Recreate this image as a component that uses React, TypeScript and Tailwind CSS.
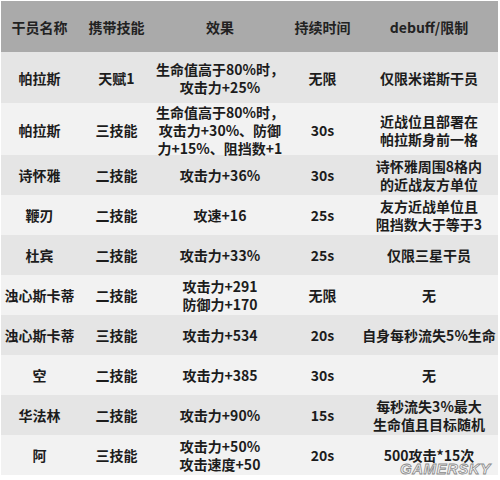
const rows = [
  { name: '帕拉斯', skill: '天赋1', effect: ['生命值高于80%时，', '攻击力+25%'], time: '无限', limit: ['仅限米诺斯干员'], h: 'h-[51px]' },
  {
    name: '帕拉斯',
    skill: '三技能',
    effect: ['生命值高于80%时，', '攻击力+30%、防御', '力+15%、阻挡数+1'],
    time: '30s',
    limit: ['近战位且部署在', '帕拉斯身前一格'],
    h: 'h-[52px]',
  },
  { name: '诗怀雅', skill: '二技能', effect: ['攻击力+36%'], time: '30s', limit: ['诗怀雅周围8格内', '的近战友方单位'], h: 'h-10' },
  { name: '鞭刃', skill: '二技能', effect: ['攻速+16'], time: '25s', limit: ['友方近战单位且', '阻挡数大于等于3'], h: 'h-10' },
  { name: '杜宾', skill: '二技能', effect: ['攻击力+33%'], time: '25s', limit: ['仅限三星干员'], h: 'h-10' },
  { name: '浊心斯卡蒂', skill: '二技能', effect: ['攻击力+291', '防御力+170'], time: '无限', limit: ['无'], h: 'h-10' },
  { name: '浊心斯卡蒂', skill: '三技能', effect: ['攻击力+534'], time: '20s', limit: ['自身每秒流失5%生命'], h: 'h-10' },
  { name: '空', skill: '二技能', effect: ['攻击力+385'], time: '30s', limit: ['无'], h: 'h-10' },
  { name: '华法林', skill: '二技能', effect: ['攻击力+90%'], time: '15s', limit: ['每秒流失3%最大', '生命值且目标随机'], h: 'h-10' },
  { name: '阿', skill: '三技能', effect: ['攻击力+50%', '攻击速度+50'], time: '20s', limit: ['500攻击*15次'], h: 'h-10' },
]

const cols = 'grid grid-cols-[77px_77px_130px_75px_138px]'

const Cell = ({ lines }: { lines: string[] }) => (
  <div className="flex flex-col items-center justify-center text-center whitespace-nowrap leading-[18px]">
    {lines.map((l, i) => (
      <span key={i}>{l}</span>
    ))}
  </div>
)

export default function App() {
  return (
    <div className="relative w-[500px] h-[480px] bg-white font-['Noto_Sans_CJK_SC',sans-serif] font-bold text-[14px] text-[#1c1c1c]">
      <div className="pt-px pl-px w-[498px]">
        <div className={`${cols} h-[51px] bg-[#aaaaaa] text-[#222]`}>
          <Cell lines={['干员名称']} />
          <Cell lines={['携带技能']} />
          <Cell lines={['效果']} />
          <Cell lines={['持续时间']} />
          <Cell lines={['debuff/限制']} />
        </div>
        {rows.map((r, i) => (
          <div key={i} className={`${cols} ${r.h} ${i % 2 === 0 ? 'bg-[#e5e5e5]' : 'bg-[#f2f2f2]'}`}>
            <Cell lines={[r.name]} />
            <Cell lines={[r.skill]} />
            <Cell lines={r.effect} />
            <Cell lines={[r.time]} />
            <Cell lines={r.limit} />
          </div>
        ))}
      </div>
      <div className="absolute left-[400px] top-[458px] font-['Liberation_Sans',sans-serif] italic font-bold text-[15px] tracking-[0.5px] text-[#f4f4f4] [-webkit-text-stroke:0.8px_#8a8a8a]">
        GAMERSKY
      </div>
    </div>
  )
}
